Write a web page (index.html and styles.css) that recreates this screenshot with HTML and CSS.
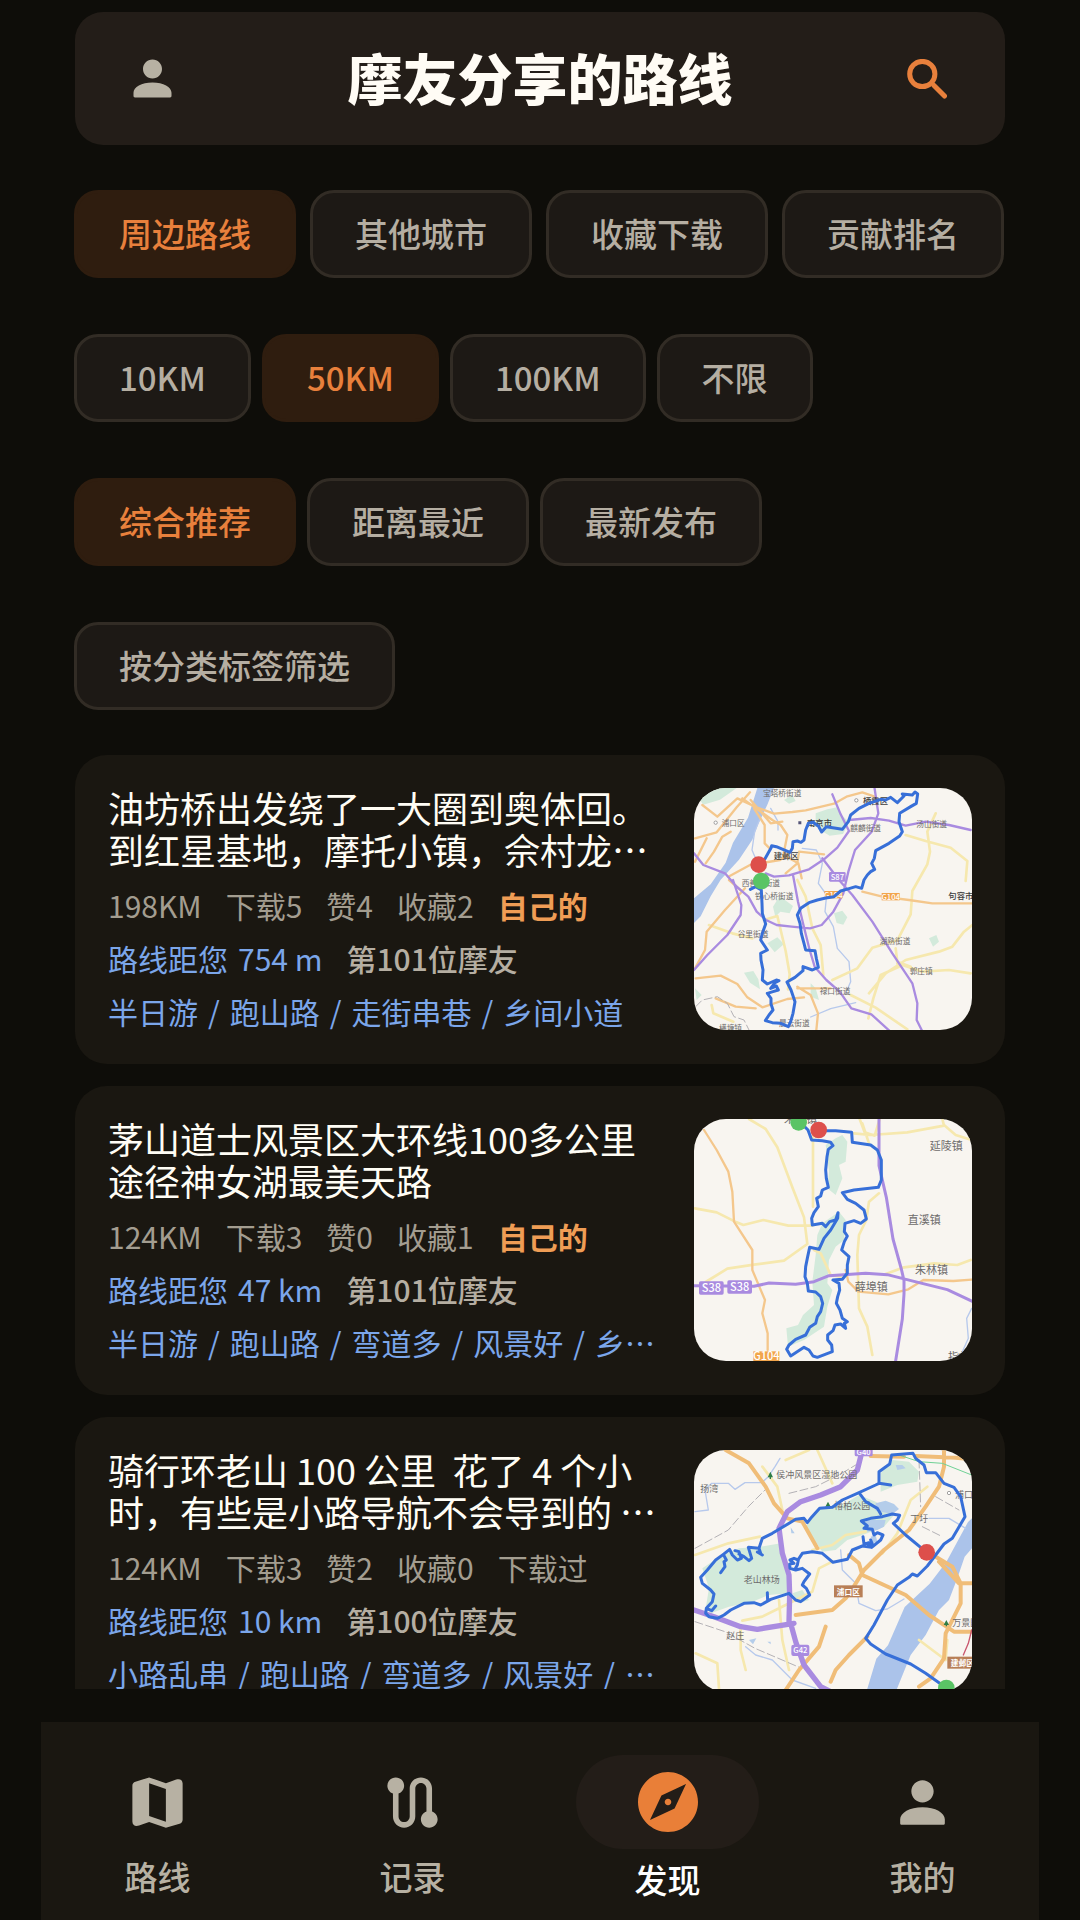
FILE: index.html
```html
<!DOCTYPE html>
<html lang="zh-CN">
<head>
  <meta charset="UTF-8">
  <meta name="viewport" content="width=device-width, initial-scale=1">
  <title>摩友分享的路线</title>
  <link rel="stylesheet" href="styles.css">
</head>
<body>

  <header class="topbar">
    <button class="icon-btn" aria-label="个人中心">
      <svg class="icon-person" viewBox="0 0 24 24"><path d="M12 12c2.210 0 4-1.790 4-4s-1.790-4-4-4-4 1.790-4 4 1.790 4 4 4zm0 1.700c-4.600 0-8 2-8 4.300v1.400c0 .35.25.6.6.6h14.800c.35 0 .6-.25.6-.6V18c0-2.300-3.400-4.300-8-4.300z"/></svg>
    </button>
    <h1>摩友分享的路线</h1>
    <button class="icon-btn search" aria-label="搜索">
      <svg class="icon-search" viewBox="0 0 40 40"><circle cx="15.300" cy="15" r="12.600"/><path d="M27 26.500 37.500 37"/></svg>
    </button>
  </header>

  <!-- 筛选 -->
  <section class="filters">
    <div class="chips tabs">
      <button class="chip active">周边路线</button>
      <button class="chip">其他城市</button>
      <button class="chip">收藏下载</button>
      <button class="chip">贡献排名</button>
    </div>
    <div class="chips">
      <button class="chip">10KM</button>
      <button class="chip active">50KM</button>
      <button class="chip">100KM</button>
      <button class="chip">不限</button>
    </div>
    <div class="chips">
      <button class="chip active">综合推荐</button>
      <button class="chip">距离最近</button>
      <button class="chip">最新发布</button>
    </div>
    <div class="chips">
      <button class="chip">按分类标签筛选</button>
    </div>
  </section>

  <!-- 路线列表 -->
  <main class="list">
    <article class="card">
      <div class="info">
        <h2>油坊桥出发绕了一大圈到奥体回。<br>到红星基地，摩托小镇，佘村龙…</h2>
        <p class="meta"><span>198KM</span><span>下载5</span><span>赞4</span><span>收藏2</span><span class="own">自己的</span></p>
        <p class="meta"><span class="distance"><span>路线距您</span><span>754 m</span></span><span class="rank">第101位摩友</span></p>
        <p class="tags"><span>半日游</span><span>/</span><span>跑山路</span><span>/</span><span>走街串巷</span><span>/</span><span>乡间小道</span></p>
      </div>
      <svg class="map" viewBox="15 24 834 726">
        <path class="river" d="M205 24h50l-20 50-28 60-17 45-40 60-55 60-30 50-30 60-20 20V355l50-42 45-65 22-60 45-75z"/>
        <path class="stream" d="M215 110l-18 45-8 55 15 35M245 85l22 40v25M340 205l42 5 18 40-12 60 25 35-5 50 25 45 12 65 35 40 5 60-15 35M500 668l-75 18-60 25"/>
        <path class="park" d="M380 100l35-12 30-6 10 20 25 25-18 35-40 5-30-18-12-20zM435 400l25-8 15 20-12 22-20-5zM252 380l20-32 40 30-10 22-28-5-15 15zM165 578l28-5 15 25 5 30-30-20zM720 475l22-10 8 20-18 15zM235 490l30-18 20 20-28 25zM18 40l60-16h65l-50 35-50 15zM285 60l25-15 10 18-20 8zM365 610l15 15 10 35-25-10zM18 625l20 20-15 15z"/>
        <path class="yellow" d="M225 420l40-12 25 105 12 70-5 45M325 300l25 50 20 95 25 50 8 90M430 600l75-35 45-62 75-22 40-78 5-70 45-80 8-38-8-60 25-55M650 165l60 18 75 20 50 40-5 60M485 645l75 38 95 65M630 560l-55 25-22 70-15 60M620 505l5 40 40 15M540 640l50-60 60-40 100-25 40-15 35-45 25-20M625 550l75 25 80-5 65 10M60 435l70 25 60 15M68 675l5 25 60 25"/>
        <path class="orange" d="M18 175l65-18 60-75 40-45M40 75l45 35 60-55 60 28 50 18 55-5 40-5 85-20 40-22 45-12 35 12M18 245l35-70M50 250l25-35 25-45 25-15M160 55l90 65 25 15 20 30-12 60 45 25 10 45M195 85l32 50v55l15 15M118 290l65-35 90-15 25-20M290 280l35-30 5-35 75 8M18 565l30-55 5-55 55-65 60-65M20 595l75-8 50 25 30 40 45 30 75-25 50-5M325 620l40 25 22 55-5 50M325 625l100 0M520 335l60 15 80 10 70 10 90 0 28 0M80 655l60 25 60 5M185 60l60 70 35-5M120 300l40 35"/>
        <path class="purple" d="M15 220l28 35 65 25 35 40 35 30 25 45 28 25 32 15 45 5 55 5 35-10 35-40 30-55 15-65 20-65 50-55 20-55-12-80M15 570l40-45 60-60 40-60 2-30-25-75M230 280l25 10 45-4 60-18 45-30 40-35 35-50-25-50-25-60M480 120l65-6 55 8 50 15 60-12 70 10 65 15M312 285l15 80 15 65 20 80 15 50 35 40 40 35 35 50 60 18 55 50M400 235l50 65 40 45 60 80 60 95 60 90 15 60-2 50 20 40"/>
        <path class="rail" d="M20 680l20-20 45-10 30 20 20 40 30 10 15 30"/>
        <g class="label">
          <text x="222" y="49">宝塔桥街道</text><text x="98" y="137">浦口区</text>
          <text x="484" y="152">麒麟街道</text><text x="682" y="142">汤山街道</text>
          <text x="198" y="357">铁心桥街道</text><text x="146" y="472">谷里街道</text>
          <text x="572" y="491">湖熟街道</text><text x="662" y="583">郭庄镇</text>
          <text x="392" y="642">禄口街道</text><text x="270" y="738">晨云街道</text>
          <text x="90" y="754">横塘镇</text><text x="158" y="317">西善桥街道</text>
        </g>
        <g class="label dark">
          <text x="522" y="73">栖霞区</text><text x="354" y="138">南京市</text>
          <text x="254" y="237">建邺区</text><text x="778" y="357">句容市</text>
        </g>
        <circle class="dot" cx="80" cy="128" r="5"/><circle class="dot" cx="502" cy="61" r="5"/><path class="cap" d="M328 124h9v9h-9z"/>
        <rect class="purple-bg" x="420" y="276" width="50" height="29" rx="4"/><text class="badge-text" x="445" y="300">S87</text>
        <rect class="orange-bg" x="406" y="333" width="54" height="22"/><rect class="orange-bg" x="578" y="339" width="54" height="22"/>
        <text class="badge-text" x="433" y="353">G104</text><text class="badge-text" x="605" y="359">G104</text>
        <path class="route" d="M228 236 246 204 248 197 262 200 303 217 310 205 312 185 325 183 336 187 345 180 350 150 358 130 372 127 388 138 398 156 412 140 460 148 478 125 485 105 510 85 540 70 575 58 590 60 605 52 625 68 645 48 640 42 670 45 678 36 686 42 682 70 665 80 632 100 630 125 640 155 632 168 600 190 560 212 556 235 548 250 557 268 545 275 535 285 525 300 518 325 500 320 480 326 455 333 435 350 410 354 385 360 360 368 335 385 325 405 333 430 337 460 345 490 350 510 378 512 382 535 388 562 370 570 342 560 342 572 318 592 294 606 306 630 318 665 312 700 305 725 298 740 275 730 250 728 229 722 240 705 252 690 246 672 246 655 235 640 252 635 268 630 262 618 245 625 258 608 270 602 262 600 235 612 220 600 222 570 216 540 215 520 235 510 225 495 215 480 220 460 230 432 220 400 219 370 217 330 200 320 184 328"/>
        <circle class="end" cx="209" cy="254" r="25"/><circle class="start" cx="217" cy="303" r="25"/>
      </svg>
    </article>

    <article class="card">
      <div class="info">
        <h2>茅山道士风景区大环线100多公里<br>途径神女湖最美天路</h2>
        <p class="meta"><span>124KM</span><span>下载3</span><span>赞0</span><span>收藏1</span><span class="own">自己的</span></p>
        <p class="meta"><span class="distance"><span>路线距您</span><span>47 km</span></span><span class="rank">第101位摩友</span></p>
        <p class="tags"><span>半日游</span><span>/</span><span>跑山路</span><span>/</span><span>弯道多</span><span>/</span><span>风景好</span><span>/</span><span>乡…</span></p>
      </div>
      <svg class="map" viewBox="15 27 834 726">
        <path class="park" d="M440 85l20-10 15 20-5 60-20 10 10 40-20 50-25-20 5-50-10-80zM400 340l50-35 20 25-5 60-25 20-20 40-5 70 15 20-15 50-10 60-60 40-48 20-5-55 35-10 15-30 33-30-5-70 10-80 5-60z"/>
        <path class="yellow" d="M180 27l50 30 35 55 45 120 35 90 10 80-70 50-90 12-80 12-65 40M18 295l65 12 60 30 20 8 60-15 75 17 72 0M372 60v230M375 420l20 10 30 65 30 5M495 70l50 5 110-8 110-20-5-20M765 45l35 30 48 15M512 27l15 40 30 10 15-50M570 250l-30 25-8 55-22 45-5 60 5 160 25 55 15 85M590 492l55-20 90-12 70 5 40-15M520 40l20 60"/>
        <path class="orange" d="M45 60l38 60 35 65 12 60 5 90 55 85v60l38 90-8 40 16 60v50M470 480l8 35 30 30 90 8 60-15 45-28 90 3 55-4"/>
        <path class="stream" d="M848 595l-15 30 5 60-20 45"/>
        <path class="purple wide" d="M570 27v140l22 95 20 125 25 90 8 35v40l-5 75-20 125M15 527l180 2 45-10 80 4 55-8 45-18 110-7 65 4 80 20 100 25 75 35"/>
        <rect class="purple-bg" x="30" y="514" width="74" height="40" rx="5"/><rect class="purple-bg" x="115" y="511" width="74" height="40" rx="5"/>
        <text class="badge-text big" x="67" y="545">S38</text><text class="badge-text big" x="152" y="542">S38</text>
        <rect class="orange-bg" x="193" y="724" width="78" height="32"/><text class="badge-text big" x="232" y="751">G104</text>
        <g class="label big">
          <text x="285" y="38">朱阳镇</text><text x="722" y="119">延陵镇</text><text x="656" y="341">直溪镇</text>
          <text x="678" y="491">朱林镇</text><text x="497" y="542">薛埠镇</text><text x="777" y="752">指前</text>
        </g>
        <path class="route" d="M345 48 357 60 368 90 400 92 425 97 432 107 418 118 414 140 410 180 412 205 418 232 400 240 395 258 383 265 388 290 375 308 368 325 370 345 400 340 410 350 422 335 440 330 447 308 446 325 425 360 405 385 390 418 362 412 356 440 350 470 348 500 355 520 358 543 380 546 395 560 401 580 395 605 385 620 380 640 362 652 350 675 320 688 300 705 293 718 305 738 345 712 360 720 372 738 385 742 430 725 428 705 416 690 416 675 432 662 438 645 455 642 470 655 466 640 475 635 460 625 453 600 442 580 446 560 452 540 450 520 432 510 460 508 475 490 475 465 480 440 458 420 466 395 475 378 466 365 468 340 495 332 515 340 532 327 525 300 500 280 475 268 460 248 495 240 568 232 577 210 577 150 565 120 545 105 490 97 488 67 440 62 405 62"/>
        <circle class="start" cx="329" cy="37" r="25"/><circle class="end" cx="389" cy="60" r="25"/>
      </svg>
    </article>

    <article class="card">
      <div class="info">
        <h2>骑行环老山 100 公里&nbsp; 花了 4 个小<br>时，有些是小路导航不会导到的 …</h2>
        <p class="meta"><span>124KM</span><span>下载3</span><span>赞2</span><span>收藏0</span><span>下载过</span></p>
        <p class="meta"><span class="distance"><span>路线距您</span><span>10 km</span></span><span class="rank">第100位摩友</span></p>
        <p class="tags"><span>小路乱串</span><span>/</span><span>跑山路</span><span>/</span><span>弯道多</span><span>/</span><span>风景好</span><span>/</span><span>…</span></p>
      </div>
      <svg class="map" viewBox="15 30 834 726">
        <path class="river" d="M849 235v90l-22 25-22 65-25 65-30 30-40 75-45 60-45 111h-88l30-100 35-40 50-115 75-70 50-65 65-120z"/>
        <path class="park" d="M100 345l50-20 65-5 60-10 20 80 5 70-60 5-50 20-70 15-55 20-15-15 10-60-20-60zM350 260l40-55 70-10 50-30 50 20 60 35-35 40-50 20-60 20-35 30-40 5zM575 100l35-40 50 5 30 30-5 30-60 10-50 20zM310 460l30-10 20 30-30 10z"/>
        <path class="lake" d="M560 190l30-8 25 10 15 15-20 15-50-10zM530 240l60 0-5 20-20 10-30 5zM620 75l20 0 10 10-25 5zM545 290l15-5 5 20-15 5zM305 262l12 18-10 0zM180 600l22-5-10 18zM235 605h10v8z"/>
        <path class="stream" d="M18 215l40-5-10-60 20-20 50 0 20 18 30-20 50 0 20-18 20-30 15-25M455 330l5 60 40 40 10 60 50 22 35-5 50-30M170 620l30 25 50 15 60 60 70 25M720 235l60 0 50 30"/>
        <path class="yellow" d="M18 345l100-35 95-20M220 80l45 60 15 70M290 60l70-30M385 30l45 100M370 330l60-15 40-30 60-10M430 365l-40 20-20 70-80 40-70 35-60 12M90 745l-5-75-65-30M155 560v70l15 60M270 480l10 120 20 90M580 340l45-60 40-100 50-40M690 600l80 60 5-60"/>
        <path class="rail" d="M18 325l100-55 60-70 50-50M300 160l80-20 70-35 50-30M18 545l90 30 90 50 140 60M690 60l5 140M740 170l70 40M700 260l60 30"/>
        <path class="orange wide" d="M110 30l70 40 50 70 25 50 40 45 45 10 45 80M545 48l100 2M680 48l120 5 48 5M765 30v50l-15 60-40 60-50 70-75 60-60 60-40 65-15 20-40 35-110 15M535 590l-55 55-40 45-15 35M480 345l30 25 10 35 130 60 70 60 75 50h53M740 350l50 30 25 50v60l-45 90-5 75-40 60-35 25M290 750l40-60 60-70 20-60M750 365l60 65h38"/>
        <path class="purple thick" d="M520 30l-15 60-50 50-60 25-60 20-40 30-25 50 10 75 20 65 2 60-2 80M15 510l60 20 80 30 50 8 110-18M305 550l15 55 25 70 50 65 30 15"/>
        <path class="green" d="M630 45l60 20 70 5 88 35"/><path class="red" d="M848 570l-10 40-15 35"/>
        <rect class="purple-bg" x="497" y="24" width="54" height="25" rx="5"/><text class="badge-text" x="524" y="45">G40</text>
        <rect class="purple-bg" x="307" y="614" width="54" height="34" rx="6"/><text class="badge-text" x="334" y="640">G42</text>
        <rect class="brown-bg" x="435" y="436" width="86" height="36"/><text class="badge-text zh" x="478" y="464">浦口区</text>
        <rect class="brown-bg" x="775" y="650" width="90" height="36"/><text class="badge-text zh" x="820" y="678">建邺区</text>
        <path class="tree" d="M244 95l8 17h-16zM242 108h4v9h-4zM417 185l8 15h-16zM772 540l8 15h-16zM770 550h4v9h-4z"/>
        <g class="label mid">
          <text x="262" y="115">侯冲风景区湿地公园</text><text x="34" y="157">扬湾</text><text x="436" y="208">椿柏公园</text>
          <text x="164" y="429">老山林场</text><text x="664" y="247">丁圩</text><text x="798" y="173">浦口区</text>
          <text x="112" y="596">赵庄</text><text x="790" y="558">万景园</text>
        </g>
        <circle class="dot" cx="780" cy="159" r="5"/>
        <path class="route" d="M95 398 108 380 105 365 112 360 103 343 80 360 55 390 35 412 40 430 65 450 75 462 70 485 52 505 50 520 60 530 85 535 105 525 125 510 165 490 195 488 215 495 245 478 300 460 320 480 335 485 362 465 352 445 340 435 345 425 362 402 340 385 320 390 303 385 302 372 315 370 303 360 315 355 328 360 325 375 318 388M328 358 340 340 370 335 400 340 432 367 475 358 490 330 520 318 548 322 575 300 582 285 565 278 555 285 550 268 525 265 535 258 517 243 545 235 580 230 610 222 632 226 625 240 613 250 650 285 713 337M548 322 535 310 525 312 522 290M545 300 550 312 538 308M52 505 68 512 80 498M235 458 236 483M103 343 122 328 130 345 145 360 157 355 150 335 138 332M150 342 165 350 180 362 188 355 178 322 210 325 215 340 205 336 220 345M210 325 220 295 250 280 320 238 345 235 355 248 365 235 392 205 430 202 460 180 510 158 560 135 570 130 570 95 602 72 608 45 672 40 680 55 705 75 712 98 740 98 765 130 795 142 815 170 828 230 790 295 765 312 740 345 715 378 685 408 670 402 660 412 625 435 595 480 555 555 530 595 545 612 590 642 665 672 710 700 772 744M510 158 530 185 565 205 575 222M570 130 605 135"/>
        <circle class="end" cx="713" cy="337" r="25"/><circle class="start" cx="772" cy="744" r="25"/>
      </svg>
    </article>
  </main>

  <!-- 底部导航 -->
  <nav class="tabbar">
    <a class="tab" href="#">
      <span class="tab-icon"><svg viewBox="0 0 24 24"><path fill-rule="evenodd" d="M9 3l6 2.100 3.700-1.300c1.200-.45 2.300.1 2.300 1.400v13c0 .7-.4 1.200-1.100 1.450L15 21l-6-2-3.600 1.250C4.100 20.700 3 20.200 3 18.800V6c0-.7.4-1.200 1.100-1.400zm0 2.100v11.750l6 2.050V7.200z"/></svg></span>
      <span class="tab-name">路线</span>
    </a>
    <a class="tab" href="#">
      <span class="tab-icon"><svg viewBox="0 0 24 24"><path d="M19 15.180V7c0-2.210-1.790-4-4-4s-4 1.790-4 4v10c0 1.100-.9 2-2 2s-2-.9-2-2V8.820C8.160 8.400 9 7.300 9 6c0-1.660-1.340-3-3-3S3 4.340 3 6c0 1.300.84 2.400 2 2.820V17c0 2.210 1.790 4 4 4s4-1.790 4-4V7c0-1.100.9-2 2-2s2 .9 2 2v8.180c-1.160.41-2 1.510-2 2.820 0 1.660 1.340 3 3 3s3-1.340 3-3c0-1.300-.84-2.400-2-2.820z"/></svg></span>
      <span class="tab-name">记录</span>
    </a>
    <a class="tab active" href="#">
      <span class="tab-icon"><svg viewBox="0 0 24 24"><path d="M12 10.900c-.61 0-1.100.49-1.100 1.100s.49 1.100 1.100 1.100 1.100-.49 1.100-1.100-.49-1.100-1.100-1.100zM12 2C6.480 2 2 6.480 2 12s4.480 10 10 10 10-4.480 10-10S17.520 2 12 2zm2.190 12.190L6 18l3.810-8.190L18 6l-3.810 8.190z"/></svg></span>
      <span class="tab-name">发现</span>
    </a>
    <a class="tab" href="#">
      <span class="tab-icon"><svg viewBox="0 0 24 24"><path d="M12 12c2.210 0 4-1.790 4-4s-1.790-4-4-4-4 1.790-4 4 1.790 4 4 4zm0 1.700c-4.600 0-8 2-8 4.300v1.400c0 .35.25.6.6.6h14.800c.35 0 .6-.25.6-.6V18c0-2.300-3.400-4.300-8-4.300z"/></svg></span>
      <span class="tab-name">我的</span>
    </a>
  </nav>

</body>
</html>
```
FILE: styles.css
```css
* {
  box-sizing: border-box;
}

body {
  margin: 0;
  height: 100vh;
  display: flex;
  flex-direction: column;
  overflow: hidden;
  background-color: #0e0d09;
  color: #b5aea2;
  font-family: "Noto Sans CJK SC", sans-serif;
}

h1, h2, p {
  margin: 0;
}

button {
  font-family: inherit;
  cursor: pointer;
}

/* 顶部 */
.topbar {
  display: flex;
  align-items: center;
  justify-content: space-between;
  height: 133px;
  margin: 12px 75px 0;
  padding: 0 49px;
  border-radius: 28px;
  background: #231d18;
  flex-shrink: 0;
}

.topbar h1 {
  padding-bottom: 5px;
  font-size: 55px;
  line-height: 80px;
  font-weight: 900;
  color: #fffcf5;
}

.icon-btn {
  display: flex;
  align-items: center;
  justify-content: center;
  width: 57px;
  height: 57px;
  padding: 0;
  border: none;
  background: none;
}

.icon-person {
  width: 57px;
  height: 57px;
  fill: #b7b1a3;
}

.icon-search {
  width: 40px;
  height: 40px;
  fill: none;
  stroke: #e8803c;
  stroke-width: 5;
  stroke-linecap: round;
}

/* 筛选按钮 */
.filters {
  display: flex;
  flex-direction: column;
  gap: 56px;
  padding: 45px 74px;
  flex-shrink: 0;
}

.chips {
  display: flex;
  gap: 11px;
}

.tabs {
  gap: 14px;
}

.chip {
  height: 88px;
  padding: 0 42px 3px;
  border: 3px solid #322c25;
  border-radius: 24px;
  background: #1d1915;
  color: #b5aea2;
  font-size: 33px;
  line-height: 40px;
  font-weight: 500;
  white-space: nowrap;
}

.chip.active {
  background: #2f1d0f;
  border-color: #2f1d0f;
  color: #e8803c;
}

/* 路线卡片 */
.list {
  flex: 1;
  min-height: 0;
  display: flex;
  flex-direction: column;
  gap: 22px;
  margin: 0 75px 33px;
  overflow: hidden;
}

.card {
  display: flex;
  justify-content: space-between;
  align-items: center;
  gap: 32px;
  padding: 31px 33px 32px;
  border-radius: 32px;
  background: #1a1711;
  flex-shrink: 0;
}

.info {
  flex: 1;
  min-width: 0;
  display: flex;
  flex-direction: column;
  gap: 11px;
  font-size: 30px;
  line-height: 42px;
  white-space: nowrap;
}

.info h2 {
  margin-bottom: 3px;
  font-size: 36px;
  line-height: 42px;
  font-weight: 400;
  color: #fffdf5;
}

.meta {
  display: flex;
  gap: 24px;
  color: #a39d90;
}

.own {
  color: #ef9d55;
  font-weight: 700;
}

.rank {
  color: #b5aea2;
  font-weight: 500;
}

.distance, .tags {
  display: flex;
  gap: 10px;
  color: #7ba6ea;
}

/* 地图缩略图 */
.map {
  width: 278px;
  height: 242px;
  border-radius: 32px;
  background: #f8f5f0;
  flex-shrink: 0;
}

.map path {
  fill: none;
  stroke-linejoin: round;
  stroke-linecap: round;
}

.map .river { fill: #abc3ea; }
.map .lake { fill: #b4cdea; }
.map .park { fill: #d3eadb; }
.map .tree { fill: #2f7d46; }
.map .cap { fill: #555577; }
.map .stream { stroke: #b7c9ec; stroke-width: 4; }
.map .yellow { stroke: #f6e8ae; stroke-width: 8; }
.map .orange { stroke: #f4c78c; stroke-width: 7; }
.map .orange.wide { stroke: #f0bd78; stroke-width: 12; }
.map .purple { stroke: #a98be0; stroke-width: 7; }
.map .purple.wide { stroke-width: 9; }
.map .purple.thick { stroke-width: 16; }
.map .green { stroke: #6fd195; stroke-width: 3; }
.map .red { stroke: #c9566e; stroke-width: 4; }
.map .rail { stroke: #b3b1b5; stroke-width: 3; stroke-dasharray: 24 10; }
.map .route { stroke: #376fd8; stroke-width: 9; }
.map .dot { fill: #ffffff; stroke: #777777; stroke-width: 2; }
.map .start { fill: #5ac465; }
.map .end { fill: #dd4f4b; }

.purple-bg { fill: #a98be0; }
.orange-bg { fill: #f2a54c; }
.brown-bg { fill: #b87f57; }

.label {
  font-size: 23px;
  fill: #6d6b6b;
}

.label.dark {
  font-size: 25px;
  font-weight: 500;
  fill: #3e3d3d;
}

.label.mid {
  font-size: 27px;
}

.label.big {
  font-size: 33px;
}

.badge-text {
  font-size: 23px;
  font-weight: 500;
  fill: #ffffff;
  text-anchor: middle;
}

.badge-text.big {
  font-size: 33px;
}

.badge-text.zh {
  font-weight: 700;
}

/* 底部导航 */
.tabbar {
  display: flex;
  justify-content: space-between;
  height: 198px;
  margin: 0 41px;
  padding: 33px 25px 0;
  background: #1a1711;
  flex-shrink: 0;
}

.tab {
  display: flex;
  flex-direction: column;
  align-items: center;
  gap: 7px;
  width: 183px;
  color: #b7b1a3;
  text-decoration: none;
}

.tab-icon {
  display: flex;
  align-items: center;
  justify-content: center;
  width: 100%;
  height: 94px;
  border-radius: 47px;
}

.tab-icon svg {
  width: 67px;
  height: 67px;
  fill: #b7b1a3;
}

.tab-name {
  font-size: 33px;
  line-height: 40px;
  font-weight: 500;
}

.tab.active {
  gap: 10px;
  color: #ffffff;
}

.tab.active .tab-icon {
  background: #231d18;
}

.tab.active svg {
  width: 72px;
  height: 72px;
  fill: #e97f38;
}
```
